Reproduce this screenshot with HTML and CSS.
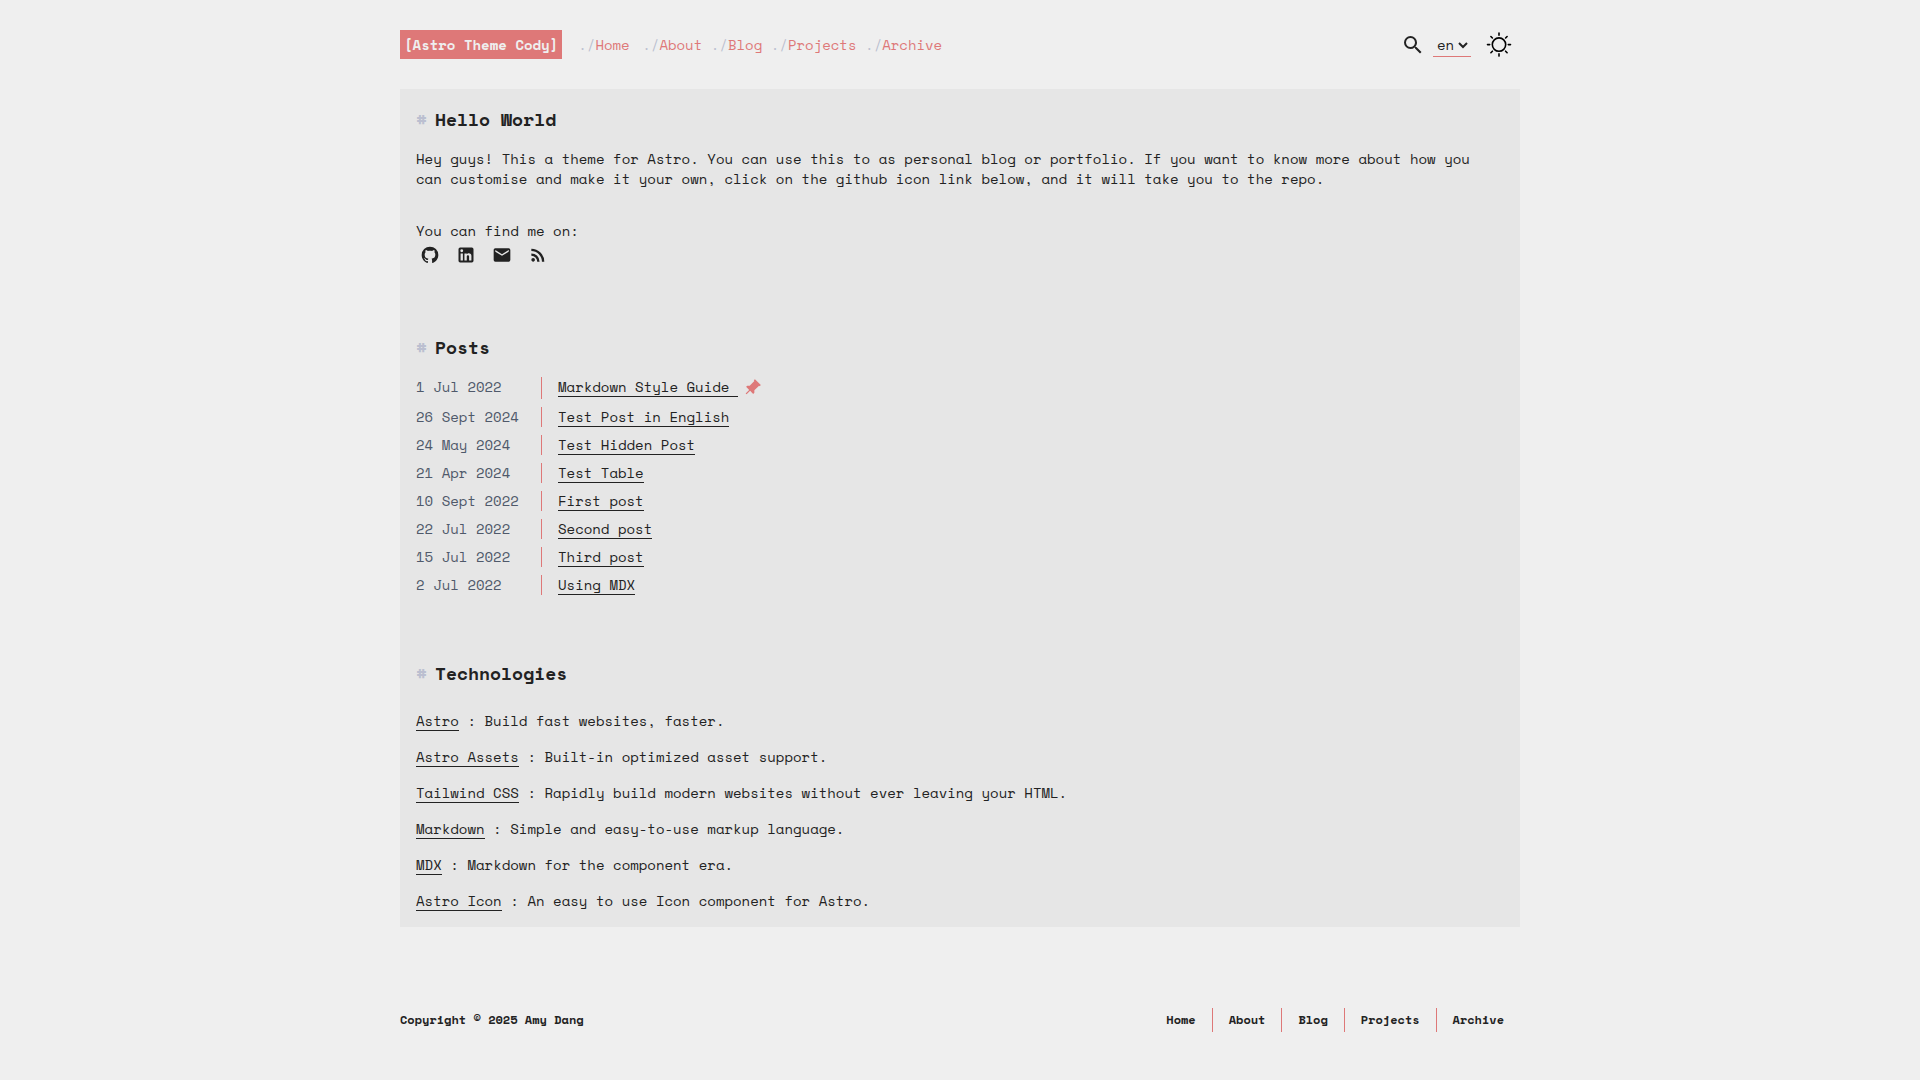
FILE: index.html
```html
<!DOCTYPE html>
<html lang="en">
<head>
<meta charset="utf-8">
<meta name="viewport" content="width=device-width, initial-scale=1">
<title>Astro Theme Cody</title>
<link rel="stylesheet" href="styles.css">
</head>
<body>
<div class="page">
  <header class="header">
    <a class="brand" href="#">[Astro Theme Cody]</a>
    <nav class="nav" aria-label="Main">
      <a class="nav-home" href="#"><span class="slash">./</span>Home</a>
      <a href="#"><span class="slash">./</span>About</a>
      <a href="#"><span class="slash">./</span>Blog</a>
      <a href="#"><span class="slash">./</span>Projects</a>
      <a href="#"><span class="slash">./</span>Archive</a>
    </nav>
    <div class="tools">
      <button class="icon-button" type="button" aria-label="Search">
        <svg class="icon-search" viewBox="0 0 24 24" fill="currentColor"><path d="M9.5 3A6.5 6.5 0 0 1 16 9.5c0 1.61-.59 3.09-1.56 4.23l.27.27h.79l5 5l-1.5 1.5l-5-5v-.79l-.27-.27A6.52 6.52 0 0 1 9.5 16A6.5 6.5 0 0 1 3 9.5A6.5 6.5 0 0 1 9.5 3m0 2C7 5 5 7 5 9.5S7 14 9.5 14S14 12 14 9.5S12 5 9.5 5"/></svg>
      </button>
      <select class="lang" aria-label="Language"><option>en</option></select>
      <button class="icon-button theme" type="button" aria-label="Toggle theme">
        <svg class="icon-sun" viewBox="0 0 26 26" fill="none" stroke="currentColor" stroke-width="1.6" stroke-linecap="round"><circle cx="13" cy="12.6" r="6.7"/><path d="M13 1.1v2.2M13 21.9v2.2M1.5 12.6h2.2M22.3 12.6h2.2M4.9 4.5l1.5 1.5M19.6 19.2l1.5 1.5M4.9 20.7l1.5-1.5M19.6 6l1.5-1.5"/></svg>
      </button>
    </div>
  </header>

  <main class="main">
    <section class="section">
      <h1 class="heading"><span class="hash">#</span>Hello World</h1>
      <p class="intro">Hey guys! This a theme for Astro. You can use this to as personal blog or portfolio. If you want to know more about how you can customise and make it your own, click on the github icon link below, and it will take you to the repo.</p>
      <p class="find">You can find me on:</p>
      <div class="social">
        <a href="#" aria-label="GitHub"><svg viewBox="0 0 24 24"><path d="M12 2A10 10 0 0 0 2 12c0 4.42 2.87 8.17 6.84 9.5c.5.08.66-.23.66-.5v-1.69c-2.77.6-3.36-1.34-3.36-1.34c-.46-1.16-1.11-1.47-1.11-1.47c-.91-.62.07-.6.07-.6c1 .07 1.53 1.03 1.53 1.03c.87 1.52 2.34 1.07 2.91.83c.09-.65.35-1.09.63-1.34c-2.22-.25-4.55-1.11-4.55-4.92c0-1.11.38-2 1.03-2.71c-.1-.25-.45-1.29.1-2.64c0 0 .84-.27 2.75 1.02c.79-.22 1.65-.33 2.5-.33s1.71.11 2.5.33c1.91-1.29 2.75-1.02 2.75-1.02c.55 1.35.2 2.39.1 2.64c.65.71 1.03 1.6 1.03 2.71c0 3.82-2.34 4.66-4.57 4.91c.36.31.69.92.69 1.85V21c0 .27.16.59.67.5C19.14 20.16 22 16.42 22 12A10 10 0 0 0 12 2"/></svg></a>
        <a href="#" aria-label="LinkedIn"><svg viewBox="0 0 24 24"><path d="M19 3a2 2 0 0 1 2 2v14a2 2 0 0 1-2 2H5a2 2 0 0 1-2-2V5a2 2 0 0 1 2-2zm-.5 15.5v-5.3a3.26 3.26 0 0 0-3.26-3.26c-.85 0-1.84.52-2.32 1.3v-1.11h-2.79v8.37h2.79v-4.93c0-.77.62-1.4 1.39-1.4a1.4 1.4 0 0 1 1.4 1.4v4.93zM6.88 8.56a1.68 1.68 0 0 0 1.68-1.68c0-.93-.75-1.69-1.68-1.69a1.69 1.69 0 0 0-1.69 1.69c0 .93.76 1.68 1.69 1.68m1.39 9.94v-8.37H5.5v8.37z"/></svg></a>
        <a href="#" aria-label="Email"><svg viewBox="0 0 24 24"><path d="m20 8l-8 5l-8-5V6l8 5l8-5m0-2H4c-1.11 0-2 .89-2 2v12a2 2 0 0 0 2 2h16a2 2 0 0 0 2-2V6a2 2 0 0 0-2-2"/></svg></a>
        <a href="#" aria-label="RSS"><svg viewBox="0 0 24 24"><path d="M6.18 15.64a2.18 2.18 0 0 1 2.18 2.18C8.36 19 7.38 20 6.18 20C5 20 4 19 4 17.82a2.18 2.18 0 0 1 2.18-2.18M4 4.44A15.56 15.56 0 0 1 19.56 20h-2.83A12.73 12.73 0 0 0 4 7.27zm0 5.66a9.9 9.9 0 0 1 9.9 9.9h-2.83A7.07 7.07 0 0 0 4 12.93z"/></svg></a>
      </div>
    </section>

    <section class="section">
      <h2 class="heading"><span class="hash">#</span>Posts</h2>
      <ul class="posts">
        <li><time>1 Jul 2022</time><span class="post"><a class="link" href="#">Markdown Style Guide </a><svg class="pin" viewBox="0 0 24 24"><path transform="rotate(45 12 12)" d="M16 12V4h1V2H7v2h1v8l-2 2v2h5.2v6h1.6v-6H18v-2z"/></svg></span></li>
        <li><time>26 Sept 2024</time><span class="post"><a class="link" href="#">Test Post in English</a></span></li>
        <li><time>24 May 2024</time><span class="post"><a class="link" href="#">Test Hidden Post</a></span></li>
        <li><time>21 Apr 2024</time><span class="post"><a class="link" href="#">Test Table</a></span></li>
        <li><time>10 Sept 2022</time><span class="post"><a class="link" href="#">First post</a></span></li>
        <li><time>22 Jul 2022</time><span class="post"><a class="link" href="#">Second post</a></span></li>
        <li><time>15 Jul 2022</time><span class="post"><a class="link" href="#">Third post</a></span></li>
        <li><time>2 Jul 2022</time><span class="post"><a class="link" href="#">Using MDX</a></span></li>
      </ul>
    </section>

    <section class="section">
      <h2 class="heading"><span class="hash">#</span>Technologies</h2>
      <ul class="tech">
        <li><a class="link" href="#">Astro</a> : Build fast websites, faster.</li>
        <li><a class="link" href="#">Astro Assets</a> : Built-in optimized asset support.</li>
        <li><a class="link" href="#">Tailwind CSS</a> : Rapidly build modern websites without ever leaving your HTML.</li>
        <li><a class="link" href="#">Markdown</a> : Simple and easy-to-use markup language.</li>
        <li><a class="link" href="#">MDX</a> : Markdown for the component era.</li>
        <li><a class="link" href="#">Astro Icon</a> : An easy to use Icon component for Astro.</li>
      </ul>
    </section>
  </main>

  <footer class="footer">
    <span>Copyright © 2025 Amy Dang</span>
    <nav class="footer-nav" aria-label="Footer">
      <a href="#">Home</a>
      <a href="#">About</a>
      <a href="#">Blog</a>
      <a href="#">Projects</a>
      <a href="#">Archive</a>
    </nav>
  </footer>
</div>
</body>
</html>
```
FILE: styles.css
```css
:root {
  --bg: #efefef;
  --panel: #e6e6e6;
  --ink: #222222;
  --accent: #de7878;
  --muted: #bbbfd0;
  --date: #4f596a;
}

* {
  box-sizing: border-box;
}

body {
  margin: 0;
  background: var(--bg);
  color: var(--ink);
  font-family: "Space Mono", "DejaVu Sans Mono", monospace;
  font-size: 14px;
  line-height: 20px;
}

a {
  color: inherit;
  text-decoration: none;
}

h1, h2, p, ul {
  margin: 0;
  padding: 0;
}

ul {
  list-style: none;
}

.page {
  max-width: 1120px;
  margin: 0 auto;
}

.header {
  display: flex;
  align-items: flex-start;
  padding: 30px 8px 29px 0;
  line-height: 21px;
}

.brand {
  padding: 4px;
  background: var(--accent);
  color: var(--bg);
  font-weight: bold;
}

.nav {
  margin-left: 16px;
  padding: 4px 0;
  color: var(--accent);
}

.nav-home {
  margin-right: 4px;
}

.slash {
  color: var(--muted);
}

.tools {
  display: flex;
  align-items: center;
  height: 30px;
  margin-left: auto;
}

.icon-button {
  display: flex;
  padding: 0;
  border: 0;
  background: none;
  color: var(--ink);
}

.icon-search {
  width: 24px;
  height: 24px;
}

.lang {
  width: 38px;
  height: 24px;
  margin: 0 15px 0 8px;
  padding: 0;
  border: 0;
  border-bottom: 1px solid var(--accent);
  background: transparent;
  color: var(--ink);
  font: inherit;
}

.theme {
  color: #000000;
}

.icon-sun {
  width: 26px;
  height: 26px;
}

.main {
  display: flex;
  flex-direction: column;
  gap: 64px;
  padding: 16px;
  background: var(--panel);
}

.heading {
  display: flex;
  align-items: center;
  gap: 8px;
  font-size: 18px;
  line-height: 28px;
}

.hash {
  width: 11px;
  color: var(--muted);
}

.intro {
  margin-top: 16px;
}

.find {
  margin-top: 32px;
}

.social {
  display: flex;
  gap: 8px;
}

.social a {
  padding: 4px;
}

.social svg {
  display: block;
  width: 20px;
  height: 20px;
  fill: currentColor;
}

.posts {
  display: flex;
  flex-direction: column;
  gap: 8px;
  margin-top: 16px;
}

.posts li {
  display: flex;
}

.posts time {
  width: 125px;
  color: var(--date);
}

.post {
  display: flex;
  align-items: flex-start;
  padding-left: 16px;
  border-left: 1px solid var(--accent);
}

.link {
  display: inline-block;
  border-bottom: 1px solid var(--ink);
  line-height: 19px;
  white-space: pre;
}

.pin {
  width: 20px;
  height: 22px;
  margin-left: 4px;
  fill: var(--accent);
}

.tech {
  margin-top: 16px;
}

.tech li {
  padding-top: 8px;
  padding-bottom: 8px;
}

.tech li:last-child {
  padding-bottom: 0;
}

.footer {
  display: flex;
  align-items: center;
  justify-content: space-between;
  padding: 81px 0 48px;
  font-size: 12px;
  font-weight: bold;
  line-height: 24px;
}

.footer-nav {
  display: flex;
}

.footer-nav a {
  padding: 0 16px;
}

.footer-nav a + a {
  border-left: 1px solid var(--accent);
}
```
